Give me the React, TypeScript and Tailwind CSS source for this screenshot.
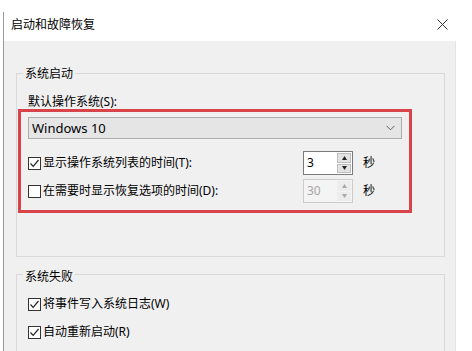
import React from 'react';

const font = { fontFamily: '"Noto Sans", "Noto Sans CJK SC", sans-serif' };

function CheckBox({ checked }: { checked?: boolean }) {
  return (
    <div className="w-[13px] h-[13px] border border-[#333333] bg-white flex items-center justify-center shrink-0">
      {checked && (
        <svg width="11" height="11" viewBox="0 0 11 11">
          <path d="M1.5 5.5 L4.2 8.3 L9.5 2" fill="none" stroke="#222" strokeWidth="1.2" />
        </svg>
      )}
    </div>
  );
}

function Spin({ value, disabled }: { value: string; disabled?: boolean }) {
  return (
    <div
      className={
        disabled
          ? 'w-[50px] h-[24px] border border-[#cccccc] bg-[#f4f4f4] flex items-stretch'
          : 'w-[50px] h-[24px] border border-[#7a7a7a] bg-white flex items-stretch'
      }
    >
      <div className={disabled ? 'flex-1 pl-[3px] text-[12px] leading-[22px] text-[#a6a6a6]' : 'flex-1 pl-[3px] text-[12px] leading-[22px] text-black'}>
        {value}
      </div>
      <div className="w-[16px] flex flex-col gap-[1px] p-[1px]">
        <div className={disabled ? 'flex-1 bg-[#ececec] flex items-center justify-center' : 'flex-1 bg-[#e3e3e3] border border-[#bdbdbd] flex items-center justify-center'}>
          <svg width="5" height="4" viewBox="0 0 5 4">
            <path d="M2.5 0 L5 4 L0 4 Z" fill={disabled ? '#a8a8a8' : '#222'} />
          </svg>
        </div>
        <div className={disabled ? 'flex-1 bg-[#ececec] flex items-center justify-center' : 'flex-1 bg-[#e3e3e3] border border-[#bdbdbd] flex items-center justify-center'}>
          <svg width="5" height="4" viewBox="0 0 5 4">
            <path d="M0 0 L5 0 L2.5 4 Z" fill={disabled ? '#a8a8a8' : '#222'} />
          </svg>
        </div>
      </div>
    </div>
  );
}

function Row({ checked, label, value, disabled }: { checked?: boolean; label: string; value: string; disabled?: boolean }) {
  return (
    <div className="flex items-center h-[24px]">
      <div className="w-[275px] flex items-center gap-[2px]">
        <CheckBox checked={checked} />
        <span className="text-[12px] leading-[16px] text-black">{label}</span>
      </div>
      <Spin value={value} disabled={disabled} />
      <span className="ml-[10px] text-[12px] leading-[16px] text-black">秒</span>
    </div>
  );
}

export default function App() {
  return (
    <div className="w-[472px] h-[351px] bg-white flex overflow-hidden" style={font}>
      <div className="w-[3px] shrink-0" />
      <div className="w-[1px] mt-[12px] bg-[#9a9a9a] shrink-0" />
      <div className="flex-1 flex flex-col">
        {/* Title bar */}
        <div className="h-[41px] pt-[8px] pl-[7px] pr-[24px] flex items-center justify-between shrink-0">
          <span className="text-[12px] leading-[16px] text-black">启动和故障恢复</span>
          <svg width="11" height="11" viewBox="0 0 11 11">
            <path d="M0.5 0.5 L10.5 10.5 M10.5 0.5 L0.5 10.5" stroke="#333" strokeWidth="1" />
          </svg>
        </div>

        {/* Body */}
        <div className="w-[452px] flex-1 bg-[#f0f0f0] border-r border-[#e4e4e4] pt-[32px] pl-[12px]">
          {/* 系统启动 */}
          <div className="w-[429px] h-[184px] border border-[#d9d9d9] flex flex-col">
            <span className="-mt-[8px] ml-[6px] px-[2px] w-fit bg-[#f0f0f0] text-[12px] leading-[16px] text-black">系统启动</span>
            <span className="mt-[12px] pl-[11px] text-[12px] leading-[16px] text-black">默认操作系统(S):</span>
            <div className="-mt-[1px] ml-[1px] w-[394px] h-[104px] border-[3px] border-[#d9434a] pt-[5px] pl-[7px] flex flex-col">
              <div className="w-[374px] h-[22px] bg-[#e5e5e5] border border-[#adadad] flex items-center justify-between pl-[3px] pr-[6px]">
                <span className="text-[13px] leading-[16px] text-black">Windows 10</span>
                <svg width="9" height="6" viewBox="0 0 9 6">
                  <path d="M0.5 0.8 L4.5 4.8 L8.5 0.8" fill="none" stroke="#606060" strokeWidth="1" />
                </svg>
              </div>
              <div className="mt-[12px] flex flex-col gap-[4px]">
                <Row checked label="显示操作系统列表的时间(T):" value="3" />
                <Row label="在需要时显示恢复选项的时间(D):" value="30" disabled />
              </div>
            </div>
          </div>

          {/* 系统失败 */}
          <div className="mt-[17px] w-[429px] h-[120px] border border-[#d9d9d9] flex flex-col">
            <span className="-mt-[6px] ml-[6px] px-[2px] w-fit bg-[#f0f0f0] text-[12px] leading-[16px] text-black">系统失败</span>
            <div className="mt-[11px] pl-[11px] flex flex-col gap-[12px]">
              <div className="flex items-center gap-[2px] h-[16px]">
                <CheckBox checked />
                <span className="text-[12px] leading-[16px] text-black">将事件写入系统日志(W)</span>
              </div>
              <div className="flex items-center gap-[2px] h-[16px]">
                <CheckBox checked />
                <span className="text-[12px] leading-[16px] text-black">自动重新启动(R)</span>
              </div>
            </div>
          </div>
        </div>
      </div>
    </div>
  );
}
